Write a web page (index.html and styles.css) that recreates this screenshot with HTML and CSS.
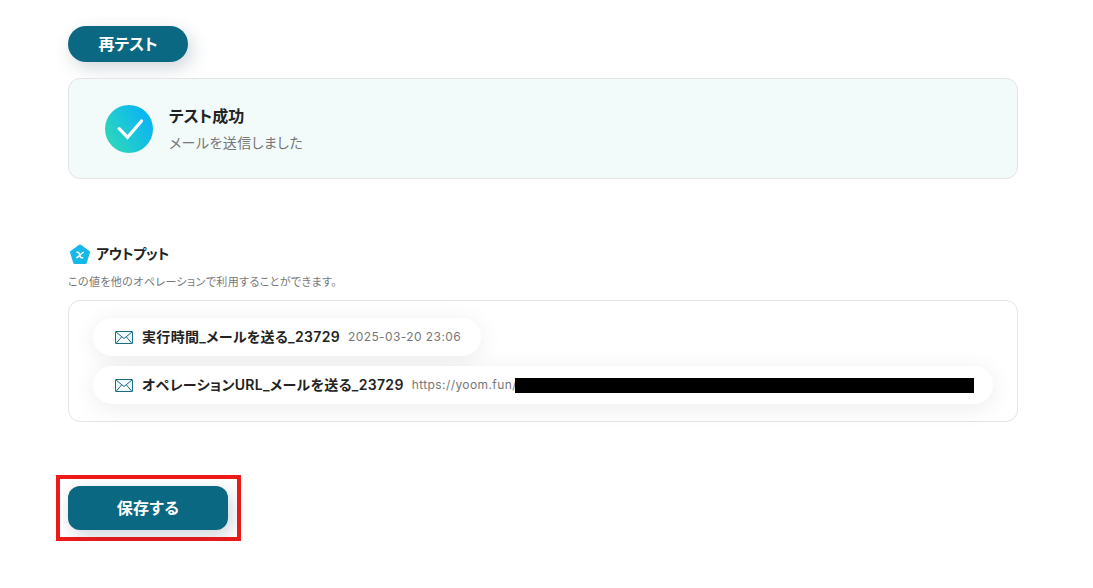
FILE: index.html
```
<!DOCTYPE html>
<html lang="ja">

<head>
    <meta charset="UTF-8">
    <meta name="viewport" content="width=device-width, initial-scale=1.0">
    <title>テスト</title>
    <link rel="stylesheet" href="styles.css">
</head>

<body>
    <main class="page">
        <button class="btn btn-retest">再テスト</button>

        <section class="result-card">
            <svg class="result-icon" viewBox="0 0 48 48" fill="none">
                <defs>
                    <linearGradient id="success" x1="4" y1="36" x2="42" y2="14" gradientUnits="userSpaceOnUse">
                        <stop stop-color="#2bd6bd" />
                        <stop offset="1" stop-color="#0cb6f2" />
                    </linearGradient>
                </defs>
                <circle cx="24" cy="24" r="24" fill="url(#success)" />
                <path d="M14.200 23.700l8.300 8.600L36.500 16" stroke="#fff" stroke-width="3.200" stroke-linecap="round" />
            </svg>
            <div class="result-body">
                <h2 class="result-title">テスト成功</h2>
                <p class="result-message">メールを送信しました</p>
            </div>
        </section>

        <section class="output">
            <h3 class="output-title">
                <svg class="output-icon" viewBox="0 0 24 24">
                    <path d="M12 4L20.500 10.200L17.300 20.500H6.700L3.500 10.200Z" fill="#16b8e8" stroke="#16b8e8"
                        stroke-width="3" stroke-linejoin="round" />
                    <path d="M8.400 10.200h1.300c.8 0 1.200.5 1.500 1.300l1 3c.3.800.7 1.300 1.500 1.300h1.500M15.800 10.200c-2.200 0-5 5.600-7.600 5.600"
                        fill="none" stroke="#fff" stroke-width="1.500" />
                </svg>
                <span>アウトプット</span>
            </h3>
            <p class="output-note">この値を他のオペレーションで利用することができます。</p>

            <div class="output-list">
                <div class="chip">
                    <svg class="chip-icon" viewBox="0 0 18 14">
                        <rect x=".5" y="1.500" width="17" height="12" rx=".5" />
                        <path d="M1 2l8 6.500L17 2M1 13.500l5.500-6.500M17 13.500l-5.500-6.500" />
                    </svg>
                    <span class="chip-name">実行時間_メールを送る_23729</span>
                    <span class="chip-value">2025-03-20 23:06</span>
                </div>
                <div class="chip">
                    <svg class="chip-icon" viewBox="0 0 18 14">
                        <rect x=".5" y="1.500" width="17" height="12" rx=".5" />
                        <path d="M1 2l8 6.500L17 2M1 13.500l5.500-6.500M17 13.500l-5.500-6.500" />
                    </svg>
                    <span class="chip-name">オペレーションURL_メールを送る_23729</span>
                    <span class="chip-value">https://yoom.fun/</span>
                    <span class="chip-mask"></span>
                </div>
            </div>
        </section>

        <div class="save-frame">
            <button class="btn btn-save">保存する</button>
        </div>
    </main>
</body>

</html>
```
FILE: styles.css
```
:root {
    --primary: #0b6883;
    --border: #e2e4e5;
    --text: #222;
    --text-sub: #777;
}

* {
    margin: 0;
    padding: 0;
    box-sizing: border-box;
}

body {
    background: #fff;
    color: var(--text);
    font-family: Inter, "Noto Sans CJK JP", sans-serif;
    font-feature-settings: "palt";
    letter-spacing: 0.02em;
}

.page {
    width: 950px;
    margin-left: 68px;
    padding-top: 26px;
}

.btn {
    display: block;
    border: none;
    padding-bottom: 2px;
    background: var(--primary);
    color: #fff;
    font: inherit;
    font-size: 16px;
    font-weight: 700;
    letter-spacing: 0;
    cursor: pointer;
    box-shadow: 4px 6px 18px rgba(20, 50, 70, 0.2);
}

.btn-retest {
    width: 120px;
    height: 36px;
    border-radius: 18px;
}

.result-card {
    display: flex;
    align-items: center;
    gap: 16px;
    height: 101px;
    margin-top: 16px;
    padding: 0 36px;
    border: 1px solid var(--border);
    border-radius: 12px;
    background: #f2fafa;
}

.result-icon {
    width: 48px;
    height: 48px;
}

.result-body {
    padding-top: 2px;
}

.result-title {
    font-size: 16px;
    font-weight: 600;
    line-height: 26px;
    letter-spacing: 0;
}

.result-message {
    color: var(--text-sub);
    font-size: 14px;
    line-height: 27px;
    letter-spacing: 0.03em;
}

.output {
    margin-top: 63px;
}

.output-title {
    display: flex;
    align-items: center;
    gap: 4px;
    height: 24px;
    font-size: 14px;
    font-weight: 600;
    letter-spacing: -0.02em;
}

.output-title span,
.chip-name,
.chip-value {
    padding-bottom: 2px;
}

.output-icon {
    width: 24px;
    height: 24px;
}

.output-note {
    margin-top: 6px;
    color: var(--text-sub);
    font-size: 11px;
    line-height: 20px;
    letter-spacing: 0.036em;
}

.output-list {
    display: flex;
    flex-direction: column;
    align-items: flex-start;
    gap: 10px;
    height: 122px;
    margin-top: 8px;
    padding: 17px 24px;
    border: 1px solid var(--border);
    border-radius: 12px;
}

.chip {
    display: flex;
    align-items: center;
    height: 38px;
    padding: 0 20px 0 22px;
    border-radius: 19px;
    background: #fff;
    box-shadow: 0 4px 24px rgba(0, 0, 0, 0.08);
    white-space: nowrap;
}

.chip-icon {
    width: 18px;
    height: 14px;
    margin-right: 9px;
    fill: #f3fafc;
    stroke: #1b6c85;
}

.chip-icon path {
    fill: none;
}

.chip-name {
    margin-right: 8px;
    font-size: 14px;
    font-weight: 600;
}

.chip-value {
    color: var(--text-sub);
    font-size: 12px;
    letter-spacing: 0.034em;
}

.chip-mask {
    width: 459px;
    height: 15px;
    margin: 0 -1px 0 -2px;
    background: #000;
}

.save-frame {
    width: 185px;
    margin: 53px 0 0 -12px;
    padding: 7px 8px;
    border: 4px solid #ee1a1a;
}

.btn-save {
    width: 160px;
    height: 44px;
    border-radius: 12px;
    letter-spacing: 0.02em;
}
```
